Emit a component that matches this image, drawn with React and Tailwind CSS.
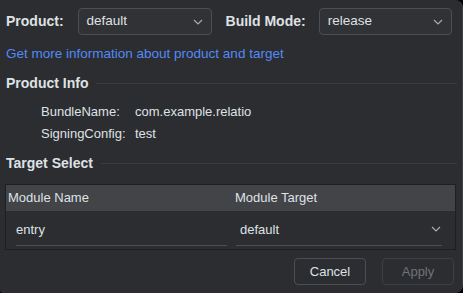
import { useState } from 'react';

const FONT = { fontFamily: '"Liberation Sans", Arial, sans-serif' };

function Chevron({ className = '' }) {
  return (
    <svg viewBox="0 0 10 6" width="10" height="6" className={className} fill="none" stroke="#a8abb2" strokeWidth="1.2">
      <polyline points="1,1 5,5 9,1" />
    </svg>
  );
}

function Select({ value, width }) {
  return (
    <div className={`flex h-[27px] items-center justify-between rounded-[4px] border border-[#4b4e54] bg-[#303236] pl-[8px] pr-[8px] ${width}`}>
      <span className="text-[13.5px] text-[#dfe1e5]">{value}</span>
      <Chevron />
    </div>
  );
}

function SectionTitle({ children }) {
  return (
    <div className="flex items-center gap-[8px] pr-[5px]">
      <span className="text-[14px] font-bold text-[#dfe1e5]">{children}</span>
      <div className="h-px flex-1 bg-[#3a3c40]" />
    </div>
  );
}

export default function App() {
  const [entry] = useState('entry');

  return (
    <div className="h-[293px] w-[463px] bg-black" style={FONT}>
      <div className="flex h-full w-full flex-col rounded-tr-[8px] rounded-br-[8px] rounded-bl-[3px] border-r border-[#3d3f43] bg-[#2b2d30] text-[#dfe1e5]">
        <div className="flex items-center pl-[6px] pt-[8px]">
          <span className="text-[14px] font-bold">Product:</span>
          <div className="ml-[14px]">
            <Select value="default" width="w-[134px]" />
          </div>
          <span className="ml-[14px] text-[14px] font-bold">Build Mode:</span>
          <div className="ml-[13px]">
            <Select value="release" width="w-[133px]" />
          </div>
        </div>

        <div className="mt-[11px] pl-[6px] text-[13.5px] leading-[16px] text-[#548af7]">
          Get more information about product and target
        </div>

        <div className="mt-[11px] pl-[6px]">
          <SectionTitle>Product Info</SectionTitle>
        </div>

        <div className="mt-[10px] grid grid-cols-[94px_1fr] gap-y-[6px] pl-[41px] text-[13px] leading-[16px]">
          <span>BundleName:</span>
          <span>com.example.relatio</span>
          <span>SigningConfig:</span>
          <span>test</span>
        </div>

        <div className="mt-[11px] pl-[6px]">
          <SectionTitle>Target Select</SectionTitle>
        </div>

        <div className="ml-[5px] mt-[10px] w-[451px] border border-[#1e1f22]">
          <div className="grid h-[26px] grid-cols-[227px_1fr] items-center bg-[#424448] text-[13px]">
            <span className="pl-[2px]">Module Name</span>
            <span className="pl-[2px]">Module Target</span>
          </div>
          <div className="grid h-[38px] grid-cols-[227px_1fr] text-[13px]">
            <div className="flex flex-col justify-end pb-[3px] pl-[10px] pr-[6px]">
              <span className="pb-[6px]">{entry}</span>
              <div className="h-px bg-[#4b4e54]" />
            </div>
            <div className="flex flex-col justify-end pb-[3px] pl-[3px] pr-[13px]">
              <div className="flex items-center justify-between pb-[6px] pl-[4px] pr-[1px]">
                <span>default</span>
                <Chevron />
              </div>
              <div className="h-px bg-[#4b4e54]" />
            </div>
          </div>
        </div>

        <div className="mt-[8px] flex justify-end gap-[16px] pr-[8px]">
          <button className="h-[27px] w-[72px] rounded-[4px] border border-[#4b4e54] text-[13px] text-[#dfe1e5]">
            Cancel
          </button>
          <button className="h-[27px] w-[72px] rounded-[4px] border border-[#3d3f44] text-[13px] text-[#6f737a]">
            Apply
          </button>
        </div>
      </div>
    </div>
  );
}
